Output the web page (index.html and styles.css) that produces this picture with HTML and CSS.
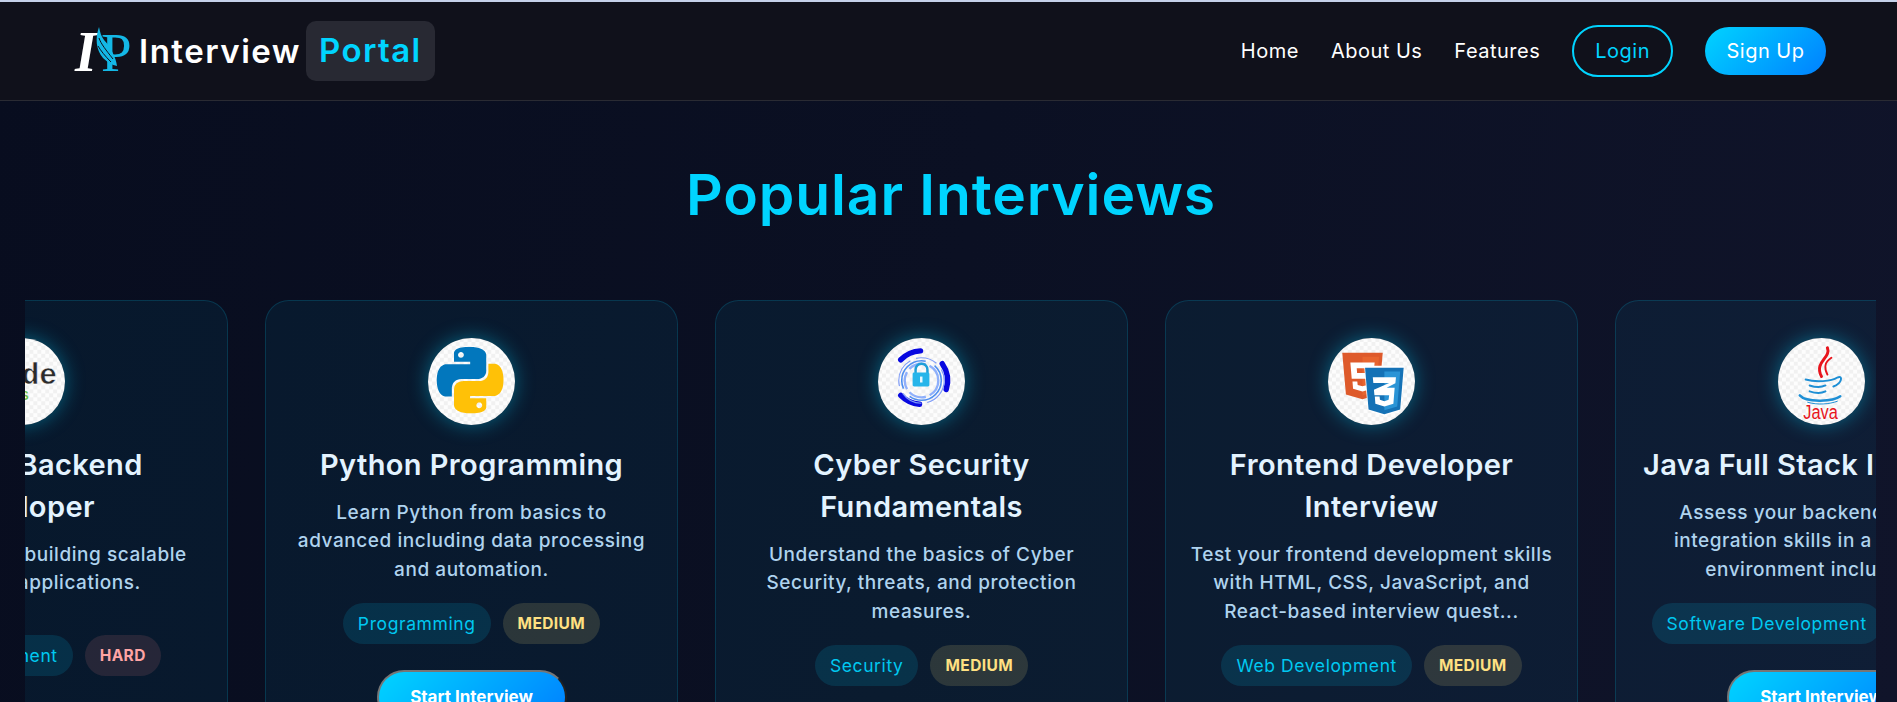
FILE: index.html
```html
<!DOCTYPE html>
<html lang="en">
<head>
<meta charset="utf-8">
<title>Interview Portal</title>
<link rel="stylesheet" href="styles.css">
</head>
<body>
<svg class="defs" width="0" height="0" aria-hidden="true">
  <defs>
    <pattern id="checker" width="8" height="8" patternUnits="userSpaceOnUse">
      <rect width="8" height="8" fill="#fdfdfd"/>
      <rect width="4" height="4" fill="#f1f1f1"/>
      <rect x="4" y="4" width="4" height="4" fill="#f1f1f1"/>
    </pattern>
  </defs>
</svg>
<header class="navbar">
  <a class="brand">
    <svg class="brand-logo" viewBox="0 0 60 50" width="60" height="50">
      <text class="logo-i" x="1" y="45">I</text>
      <text class="logo-p" x="27" y="45">P</text>
      <path d="M25 1C21 12 22 24 29 32C33 36 38 39 43 40C42 31 36 20 30 14C27 10 26 6 25 1Z" fill="#14b8e6"/>
      <path d="M25 12C27 18 32 24 39 33M24 20C27 25 31 30 37 36" stroke="#10111b" stroke-width="1" fill="none"/>
    </svg>
    <span class="brand-name">Interview</span>
    <span class="brand-chip">Portal</span>
  </a>
  <nav class="nav">
    <a class="nav-link">Home</a>
    <a class="nav-link">About Us</a>
    <a class="nav-link">Features</a>
    <a class="btn-login">Login</a>
    <a class="btn-signup">Sign Up</a>
  </nav>
</header>
<main class="popular">
  <h1 class="heading">Popular Interviews</h1>
  <div class="slider">
    <div class="track">

      <article class="card">
        <div class="icon">
          <svg viewBox="0 0 88 88">
            <rect width="88" height="88" fill="url(#checker)"/>
            <text class="node-word" x="44" y="47" text-anchor="middle">node</text>
            <text class="node-js" x="44" y="63" text-anchor="middle">JS</text>
          </svg>
        </div>
        <h2 class="title">Node.js Backend<br>Developer</h2>
        <p class="desc desc-short">Learn Node.js by building scalable<br>server-side applications.</p>
        <div class="tags"><span class="tag">Web Development</span><span class="level level-hard">HARD</span></div>
        <button class="start">Start Interview</button>
      </article>

      <article class="card">
        <div class="icon">
          <svg viewBox="0 0 88 88">
            <rect width="88" height="88" fill="url(#checker)"/>
            <g transform="translate(9 9) scale(2.8)">
              <path fill="#0277bd" d="M14.25.18l.9.2.73.26.59.3.45.32.34.34.25.34.16.33.1.3.04.26.02.2-.01.13V8.5l-.05.63-.13.55-.21.46-.26.38-.3.31-.33.25-.35.19-.35.14-.33.1-.3.07-.26.04-.21.02H8.77l-.69.05-.59.14-.5.22-.41.27-.33.32-.27.35-.2.36-.15.37-.1.35-.07.32-.04.27-.02.21v3.06H3.17l-.21-.03-.28-.07-.32-.12-.35-.18-.36-.26-.36-.36-.35-.46-.32-.59-.28-.73-.21-.88-.14-1.05-.05-1.23.06-1.22.16-1.04.24-.87.32-.71.36-.57.4-.44.42-.33.42-.24.4-.16.36-.1.32-.05.24-.01h.16l.06.01h8.16v-.83H6.18l-.01-2.75-.02-.37.05-.34.11-.31.17-.28.25-.26.31-.23.38-.2.44-.18.51-.15.58-.12.64-.1.71-.06.77-.04.84-.02 1.27.05zm-6.3 1.98l-.23.33-.08.41.08.41.23.34.33.22.41.09.41-.09.33-.22.23-.34.08-.41-.08-.41-.23-.33-.33-.22-.41-.09-.41.09z"/>
              <path fill="#ffc107" d="M21.04 6.11l.28.06.32.12.35.18.36.27.36.35.35.47.32.59.28.73.21.88.14 1.04.05 1.23-.06 1.23-.16 1.04-.24.86-.32.71-.36.57-.4.45-.42.33-.42.24-.4.16-.36.09-.32.05-.24.02-.16-.01h-8.22v.82h5.84l.01 2.76.02.36-.05.34-.11.31-.17.29-.25.25-.31.24-.38.2-.44.17-.51.15-.58.13-.64.09-.71.07-.77.04-.84.01-1.27-.04-1.07-.14-.9-.2-.73-.25-.59-.3-.45-.33-.34-.34-.25-.34-.16-.33-.1-.3-.04-.25-.02-.2.01-.13v-5.34l.05-.64.13-.54.21-.46.26-.38.3-.32.33-.24.35-.2.35-.14.33-.1.3-.06.26-.04.21-.02.13-.01h5.84l.69-.05.59-.14.5-.21.41-.28.33-.32.27-.35.2-.36.15-.36.1-.35.07-.32.04-.28.02-.21V6.07h2.09l.14.01zm-6.47 14.25l-.23.33-.08.41.08.41.23.33.33.23.41.08.41-.08.33-.23.23-.33.08-.41-.08-.41-.23-.33-.33-.23-.41-.08-.41.08z"/>
            </g>
          </svg>
        </div>
        <h2 class="title">Python Programming</h2>
        <p class="desc">Learn Python from basics to<br>advanced including data processing<br>and automation.</p>
        <div class="tags"><span class="tag">Programming</span><span class="level level-medium">MEDIUM</span></div>
        <button class="start">Start Interview</button>
      </article>

      <article class="card">
        <div class="icon">
          <svg viewBox="0 0 88 88">
            <rect width="88" height="88" fill="url(#checker)"/>
            <g fill="none" stroke="#0808e0" stroke-width="5.5" stroke-linecap="round">
              <path d="M23 22A30 30 0 0 1 43 13"/>
              <path d="M65 26A30 30 0 0 1 69 52"/>
              <path d="M23 58A30 30 0 0 0 42 67"/>
            </g>
            <g fill="none" stroke="#7f9cf8" stroke-width="1.2">
              <circle cx="44" cy="43" r="23" stroke-dasharray="30 6 22 8"/>
              <circle cx="44" cy="43" r="20" stroke="#4f8ff0" stroke-width="1.6" stroke-dasharray="44 10"/>
              <circle cx="44" cy="43" r="17" stroke="#8fb0fb" stroke-width="2.4" stroke-dasharray="18 4"/>
            </g>
            <path d="M38 36V32A6 6 0 0 1 50 32V36" fill="none" stroke="#1e9fd8" stroke-width="2.5"/>
            <rect x="35" y="35" width="17" height="14" rx="1.5" fill="#26b5ea"/>
            <rect x="42.5" y="39" width="2.5" height="6" fill="#e8f8ff"/>
          </svg>
        </div>
        <h2 class="title">Cyber Security<br>Fundamentals</h2>
        <p class="desc">Understand the basics of Cyber<br>Security, threats, and protection<br>measures.</p>
        <div class="tags"><span class="tag">Security</span><span class="level level-medium">MEDIUM</span></div>
        <button class="start">Start Interview</button>
      </article>

      <article class="card">
        <div class="icon">
          <svg viewBox="0 0 88 88">
            <rect width="88" height="88" fill="url(#checker)"/>
            <g transform="translate(11.5 15) scale(1.95 1.96)">
              <path fill="#de5a2b" d="M1.5 0h21l-1.91 21.56L11.98 24l-8.58-2.44z"/>
              <path fill="#e8652f" d="M12 2v20l7-2 1.6-18z"/>
              <path fill="#fff" d="M18.3 5H5.7l.7 8.4h8.4l-.3 3.2-2.5.7-2.5-.7-.2-1.8H6.8l.3 3.8 4.9 1.4 4.9-1.4.7-8.2H9.2L9 7.9h9z"/>
            </g>
            <g transform="translate(34.7 30) scale(1.86 1.96)">
              <path fill="#fff" d="M1 -1h22l-2 23-9 3-9-3z"/>
              <path fill="#1572b6" d="M1.5 0h21l-1.91 21.56L11.98 24l-8.58-2.44z"/>
              <path fill="#2a94d6" d="M12 2v20l7-2 1.6-18z"/>
              <path fill="#fff" d="M18.3 5H5.7l.3 2.9h8.6l-8.3 3.5.3 2.8h8l-.3 2.4-2.3.7-2.4-.7-.2-1.7H6.8l.3 3.7 4.9 1.4 4.9-1.4.7-8.2h-4.4l4.8-2.4z"/>
            </g>
          </svg>
        </div>
        <h2 class="title">Frontend Developer<br>Interview</h2>
        <p class="desc">Test your frontend development skills<br>with HTML, CSS, JavaScript, and<br>React-based interview quest...</p>
        <div class="tags"><span class="tag">Web Development</span><span class="level level-medium">MEDIUM</span></div>
        <button class="start">Start Interview</button>
      </article>

      <article class="card">
        <div class="icon">
          <svg viewBox="0 0 88 88">
            <rect width="88" height="88" fill="url(#checker)"/>
            <g fill="none" stroke="#e8141c" stroke-linecap="round">
              <path stroke-width="3" d="M50 10C54 20 36 24 44 39"/>
              <path stroke-width="2" d="M54 20C46 25 47 31 50 37"/>
            </g>
            <g fill="none" stroke="#1e8fd5" stroke-linecap="round">
              <path stroke-width="2" d="M28 42C38 45 54 44 60 40C66 37 65 46 56 49"/>
              <path stroke-width="2" d="M32 48C38 50 44 50 48 48"/>
              <path stroke-width="2" d="M32 54C38 56 44 56 48 54"/>
              <path stroke-width="2.5" d="M22 58C28 65 55 65 63 59"/>
              <path stroke-width="1" d="M30 65C40 68 52 67 60 64"/>
            </g>
            <text class="java-word" x="43" y="82" text-anchor="middle" textLength="35" lengthAdjust="spacingAndGlyphs">Java</text>
          </svg>
        </div>
        <h2 class="title">Java Full Stack Interview</h2>
        <p class="desc">Assess your backend and API<br>integration skills in a full-stack<br>environment including...</p>
        <div class="tags"><span class="tag">Software Development</span><span class="level level-medium">MEDIUM</span></div>
        <button class="start">Start Interview</button>
      </article>

    </div>
  </div>
</main>
</body>
</html>
```

FILE: styles.css
```css
* { box-sizing: border-box; }

html, body {
  margin: 0;
  height: 702px;
  overflow: hidden;
}

body {
  border-top: 2px solid #c5d1ea;
  background: linear-gradient(100deg, #080d1f 0%, #0b1023 50%, #10142a 100%);
  font-family: Inter, "Liberation Sans", sans-serif;
  color: #fff;
}

.defs { position: absolute; }

.navbar {
  display: flex;
  align-items: center;
  justify-content: space-between;
  height: 99px;
  padding: 0 71px 0 74px;
  background: #10111b;
  border-bottom: 1px solid #2a2b33;
}

.brand {
  display: flex;
  align-items: center;
}

.brand-logo { margin-right: 5px; }

.logo-i {
  font: italic 700 56px "Liberation Serif", serif;
  fill: #fff;
}

.logo-p {
  font: 400 55px "Liberation Serif", serif;
  fill: #14b8e6;
}

.brand-name {
  font-size: 33px;
  font-weight: 600;
  letter-spacing: 1.5px;
}

.brand-chip {
  margin-left: 5px;
  padding: 0 13px;
  height: 60px;
  line-height: 58px;
  background: #282933;
  border-radius: 10px;
  color: #00d4ff;
  font-size: 33px;
  font-weight: 600;
  letter-spacing: 1.4px;
}

.nav {
  display: flex;
  align-items: center;
  gap: 32px;
  font-size: 20px;
  letter-spacing: 0.5px;
}

.nav-link { color: #fff; }

.btn-login {
  display: block;
  padding: 0 21px;
  height: 52px;
  line-height: 48px;
  border: 2px solid #00d4ff;
  border-radius: 26px;
  color: #00d4ff;
}

.btn-signup {
  display: block;
  padding: 0 21.5px;
  height: 48px;
  line-height: 48px;
  border-radius: 24px;
  background: linear-gradient(135deg, #00d4ff, #0080ff);
  color: #fff;
}

.popular { padding-top: 50px; }

.heading {
  margin: 0 0 62px;
  padding-left: 5px;
  height: 87px;
  line-height: 87px;
  text-align: center;
  font-size: 57px;
  font-weight: 600;
  letter-spacing: 0.9px;
  color: #00d4ff;
}

.slider {
  margin: 0 21px 0 25px;
  overflow: hidden;
}

.track {
  display: flex;
  gap: 37px;
  margin-left: -210px;
}

.card {
  flex: 0 0 413px;
  height: 560px;
  padding: 37px 16px;
  display: flex;
  flex-direction: column;
  align-items: center;
  text-align: center;
  background: rgba(0, 212, 255, 0.06);
  border: 1px solid rgba(0, 212, 255, 0.16);
  border-radius: 24px;
}

.icon {
  flex: none;
  width: 87px;
  height: 87px;
  border-radius: 50%;
  overflow: hidden;
  box-shadow: 0 0 20px rgba(0, 212, 255, 0.4);
}

.icon svg {
  display: block;
  width: 100%;
  height: 100%;
}

.node-word {
  font: 700 30px "Liberation Mono", monospace;
  fill: #2b2b2b;
  stroke: #fff;
  stroke-width: 0.5px;
}

.node-js {
  font: 700 12px "Liberation Sans", sans-serif;
  fill: #6cc24a;
}

.java-word {
  font: 400 21px "Liberation Sans", sans-serif;
  fill: #e8141c;
}

.title {
  margin: 19px 0 13px;
  font-size: 29px;
  line-height: 42px;
  font-weight: 600;
  letter-spacing: 0.4px;
  white-space: nowrap;
  color: #e3f3ff;
}

.desc {
  margin: 0 0 19px;
  font-size: 19px;
  font-weight: 450;
  line-height: 28.4px;
  letter-spacing: 0.55px;
  white-space: nowrap;
  color: #afd3ee;
}

.desc-short { margin-bottom: 37px; }

.tags {
  display: flex;
  gap: 12px;
  margin-bottom: 26px;
}

.tag, .level {
  height: 41px;
  line-height: 41px;
  border-radius: 21px;
  white-space: nowrap;
  padding: 0 15px;
}

.tag {
  background: rgba(0, 212, 255, 0.13);
  color: #00c8f0;
  font-size: 17.5px;
  letter-spacing: 0.6px;
}

.level {
  font-size: 15.5px;
  font-weight: 700;
  letter-spacing: 0.4px;
}

.level-medium {
  background: rgba(255, 224, 130, 0.14);
  color: #ffe082;
}

.level-hard {
  background: rgba(255, 138, 138, 0.12);
  color: #ffa4a4;
}

.start {
  flex: none;
  width: 190px;
  height: 54px;
  border: 2px outset #767676;
  border-radius: 27px;
  background: linear-gradient(135deg, #00d4ff, #0080ff);
  color: #fff;
  font-family: inherit;
  font-size: 17px;
  font-weight: 700;
}
```
